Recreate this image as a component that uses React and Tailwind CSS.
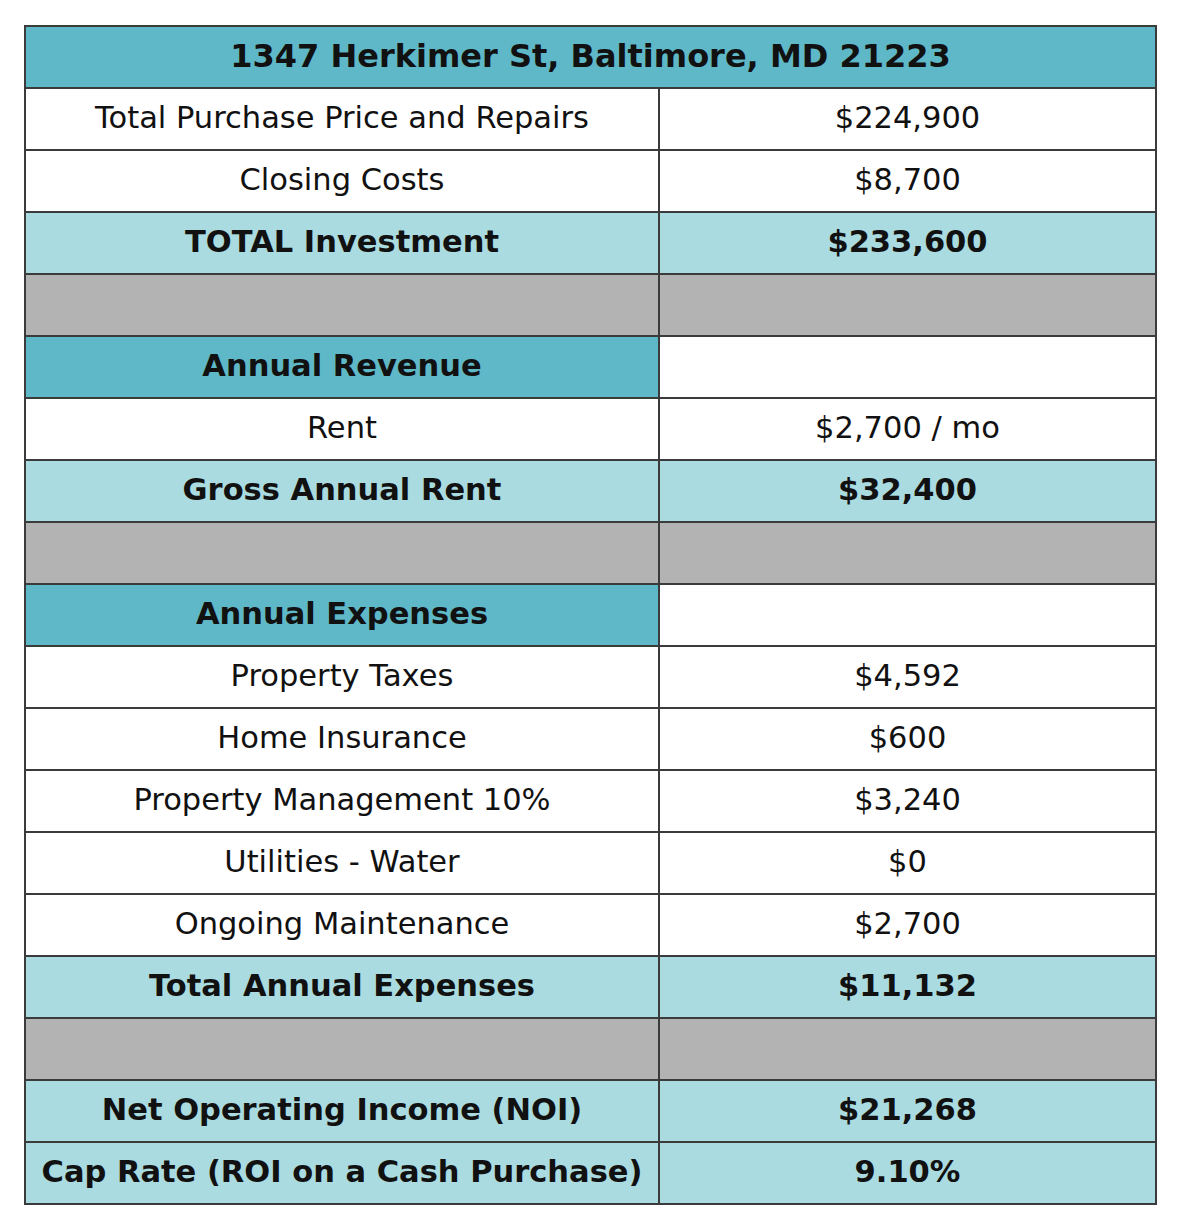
import React from 'react'

const rows = [
    { label: 'Total Purchase Price and Repairs', value: '$224,900' },
    { label: 'Closing Costs', value: '$8,700' },
    { label: 'TOTAL Investment', value: '$233,600', kind: 'total' },
    { kind: 'gap' },
    { label: 'Annual Revenue', kind: 'section' },
    { label: 'Rent', value: '$2,700 / mo' },
    { label: 'Gross Annual Rent', value: '$32,400', kind: 'total' },
    { kind: 'gap' },
    { label: 'Annual Expenses', kind: 'section' },
    { label: 'Property Taxes', value: '$4,592' },
    { label: 'Home Insurance', value: '$600' },
    { label: 'Property Management 10%', value: '$3,240' },
    { label: 'Utilities - Water', value: '$0' },
    { label: 'Ongoing Maintenance', value: '$2,700' },
    { label: 'Total Annual Expenses', value: '$11,132', kind: 'total' },
    { kind: 'gap' },
    { label: 'Net Operating Income (NOI)', value: '$21,268', kind: 'total' },
    { label: 'Cap Rate (ROI on a Cash Purchase)', value: '9.10%', kind: 'total' },
]

const cell = 'border-2 border-[#3b3b3b] h-[62px] p-0 pb-[2px] text-center align-middle'

function Row({ row }) {
    if (row.kind === 'gap') {
        return <tr className="bg-[#b3b3b3]">
            <td className={cell}></td>
            <td className={cell}></td>
        </tr>
    }
    if (row.kind === 'section') {
        return <tr>
            <td className={cell + ' bg-[#5fb8c7] font-bold'}>{row.label}</td>
            <td className={cell + ' bg-white'}></td>
        </tr>
    }
    const bg = row.kind === 'total' ? ' bg-[#aadbe0] font-bold' : ' bg-white'
    return <tr>
        <td className={cell + bg}>{row.label}</td>
        <td className={cell + bg}>{row.value}</td>
    </tr>
}

export default function App() {
    return <div className="bg-white min-h-[1230px] pt-[25px] pl-[24px]" style={{ fontFamily: '"DejaVu Sans", sans-serif' }}>
        <table className="w-[1131px] table-fixed border-collapse text-[30.5px] text-[#111111] leading-none">
            <colgroup>
                <col className="w-[634px]" />
                <col className="w-[497px]" />
            </colgroup>
            <tbody>
                <tr>
                    <td colSpan={2} className={cell + ' bg-[#5fb8c7] font-bold text-[32px]'}>1347 Herkimer St, Baltimore, MD 21223</td>
                </tr>
                {rows.map((row, i) => <Row key={i} row={row} />)}
            </tbody>
        </table>
    </div>
}
